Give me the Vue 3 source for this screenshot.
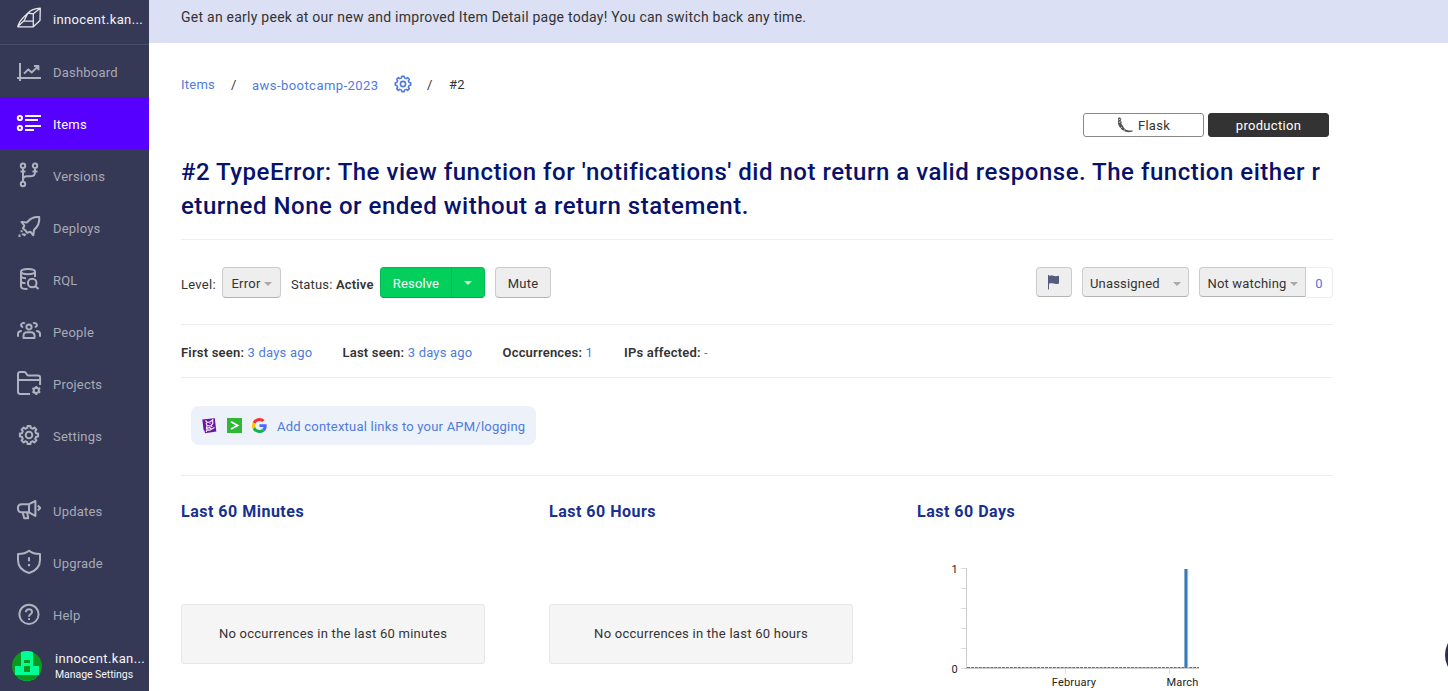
<script setup>
function gear(cx, cy, inner, outer, teeth) {
  const step = (Math.PI * 2) / teeth
  const pt = (r, a) => `${(cx + r * Math.sin(a)).toFixed(2)} ${(cy - r * Math.cos(a)).toFixed(2)}`
  let d = ''
  for (let i = 0; i < teeth; i++) {
    const a = i * step
    d += `${i ? 'L' : 'M'}${pt(inner, a - step * 0.3)}L${pt(outer, a - step * 0.2)}L${pt(outer, a + step * 0.2)}L${pt(inner, a + step * 0.3)}`
  }
  return d + 'Z'
}
const circle = (x, y, r) => `M${x - r} ${y}a${r} ${r} 0 1 0 ${2 * r} 0a${r} ${r} 0 1 0 ${-2 * r} 0Z`

const primary = [
  { name: 'Dashboard', d: 'M5 6V24M2 21H26M9 16.6L13.3 12.4L16.8 15.4L23 9.4M19 9H23.4V13.2' },
  { name: 'Items', active: true, d: circle(4.9, 9, 2.1) + circle(4.9, 19, 2.1) + 'M10 7H26M10 11H23M10 17H26M10 21H19' },
  { name: 'Versions', d: circle(8, 4.8, 2.2) + circle(20, 4.8, 2.2) + circle(8, 23, 2.2) + 'M8 7V20.8M5.5 10.5H10.5M17.5 10.5H22.5M20 7V11C20 14 18.5 15.2 16 15.2H12C9.500 15.2 8 16.5 8 19' },
  { name: 'Deploys', d: 'M24.2 4C19 3.5 15 5.5 12 9.5L6.5 9L9.3 12.5L8 15.5L10.5 17.5L12 19.8L15.5 18.8L18.3 22.3L19 17C23 13.5 24.8 9 24.2 4ZM6.6 17.3V19.2M4.5 21.5V24M8.5 20.5L7.3 22M10.5 20.8L9 23' },
  { name: 'RQL', d: 'M6 6.5C6 3 20 3 20 6.5C20 10 6 10 6 6.5V21.5C6 23.5 9 24 12.5 24M20 6.5V12M6 11.5C7 13 9 13.2 11 13.2M6 16.5C7 18 8.5 18.3 10.5 18.3' + circle(17.2, 18, 4.3) + 'M20.5 21.2L23.5 24' },
  { name: 'People', d: circle(14, 10, 2.6) + 'M8.5 21V18.7C8.5 16.3 10 15.2 12 15.2H16C18 15.2 19.5 16.3 19.5 18.7V21ZM10 6.5C6.3 4.4 4.3 9.8 8.2 10M18 6.5C21.7 4.4 23.7 9.8 19.8 10M3 19.8V17C3 14.9 4 14 6.8 14M25 19.8V17C25 14.9 24 14 21.2 14' },
  { name: 'Projects', d: 'M15 25H5.5C4 25 3 24 3 22.5V5C3 3.7 4 2.9 5.2 2.9H9.3C11.8 2.9 11 6.5 13.5 6.5H22.8C24.3 6.5 25.1 7.2 25.1 8.5V16M3 11H25' + circle(21.3, 21.4, 2.6) + 'M21.3 16.9V18.8M21.3 24V25.9M17.4 19.1L19 20.1M23.6 22.7L25.200 23.7M25.200 19.1L23.6 20.1M19 22.7L17.4 23.7' },
  { name: 'Settings', d: gear(14, 14, 7.3, 9.2, 8) + circle(14, 14, 3.3) },
]
const secondary = [
  { name: 'Updates', d: 'M14 8.2H6.8C4.2 8.2 2.9 9.8 2.9 12.2C2.9 14.6 4.2 16.3 6.8 16.3H14ZM14 8.2L20.4 5V20L14 16.3M7.7 16.5L9.2 22.3H13.2L12.2 16.5M22.8 9.5L25.2 12L22.8 14.500' },
  { name: 'Upgrade', d: 'M14 2.8C11 5.3 7 6.1 3 6.1V12C3 18.5 7.5 23 14 25C20.5 23 25 18.5 25 12V6.1C21 6.1 17 5.3 14 2.8ZM14 9.3V13.3M14 16V18.2' },
  { name: 'Help', d: circle(14, 14.3, 9.6) + 'M10.9 12.2C10.8 8.2 17.1 8.2 17 12C17 14.3 14 14.2 14 16.7M14 18.2V20' },
]
const gearIcon = gear(9, 9, 6.3, 7.8, 8) + circle(9, 9, 2.6)
</script>

<template>
  <div class="page">
    <aside class="sidebar">
      <div class="brand">
        <svg class="logo" width="28" height="24" viewBox="0 0 28 24">
          <path d="M2.8 19.8C4 13 9 10 13 6C16 2.8 20 1.6 25.3 1.2L25 13.5L18.3 19.8ZM18.3 19.5V6.8L25.3 1.2M13 6L18.3 6.8M13 6L9 13.8L18 14.2M9 13.8L2.8 19.5" />
        </svg>
        <span>innocent.kan...</span>
      </div>
      <nav>
        <a v-for="i in primary" :key="i.name" class="nav-item" :class="{ active: i.active }">
          <svg width="28" height="28" viewBox="0 0 28 28"><path :d="i.d" /></svg><span>{{ i.name }}</span>
        </a>
      </nav>
      <nav class="lower">
        <a v-for="i in secondary" :key="i.name" class="nav-item">
          <svg width="28" height="28" viewBox="0 0 28 28"><path :d="i.d" /></svg><span>{{ i.name }}</span>
        </a>
      </nav>
      <div class="user">
        <svg class="avatar" width="30" height="30" viewBox="0 0 30 30">
          <defs><clipPath id="round"><circle cx="15" cy="15" r="15" /></clipPath></defs>
          <g clip-path="url(#round)">
            <path fill="#0b981f" d="M0 0H30V30H0Z" />
            <path fill="#00ff94" d="M9 0H21V15H27V24H24V30H6V24H3V15H9Z" />
            <path fill="#0b981f" d="M12 9H18V12H12ZM12 15H18V21H12ZM6 24H24V30H6Z" />
          </g>
        </svg>
        <div><div class="user-name">innocent.kan...</div><div class="manage">Manage Settings</div></div>
      </div>
    </aside>

    <main>
      <div class="banner"><span>Get an early peek at our new and improved Item Detail page today! You can switch back any time.</span></div>
      <div class="content">
        <div class="crumbs">
          <a class="c-items">Items</a><span class="c-sep">/</span><a class="c-project">aws-bootcamp-2023</a>
          <svg width="18" height="18" viewBox="0 0 18 18"><path :d="gearIcon" /></svg><span class="c-sep2">/</span><span>#2</span>
        </div>
        <div class="badges">
          <span class="badge flask">
            <svg width="17" height="16" viewBox="0 0 17 16">
              <path fill="#555" d="M1 1L3 .3L4.4 2L3.8 3.8L4.8 5L4.3 6.5L6 9L7 11L9 12.7L12 13.5L15.7 13.6V14.5L12 15.2L8.5 14.7L5 12.7L2.5 10L1 7Z" />
              <path stroke="#fff" stroke-width=".7" fill="none" d="M1.5 3L3.5 2M1.5 5.5L3.7 4.7M5 10L3.7 11.2M8 12.3L7 13.8" />
            </svg><span>Flask</span>
          </span>
          <span class="badge production"><span>production</span></span>
        </div>
        <h1>#2 TypeError: The view function for 'notifications' did not return a valid response. The function either r<br>eturned None or ended without a return statement.</h1>

        <div class="actions">
          <span class="label level">Level:</span>
          <button class="btn error">Error<i class="caret"></i></button>
          <span class="label status">Status: <b>Active</b></span>
          <div class="resolve"><button>Resolve</button><button class="drop"><i class="caret"></i></button></div>
          <button class="btn mute">Mute</button>
          <div class="right">
            <button class="btn flag"><svg width="14" height="16" viewBox="0 0 14 16"><path d="M1 1H2V2C5 .5 7 3.2 12 1.7V9.5C8 11.3 5.5 8.3 2 9.8V15.5H1Z" /></svg></button>
            <button class="btn assign"><span>Unassigned</span><i class="caret"></i></button>
            <div class="watch"><button class="btn">Not watching<i class="caret"></i></button><span class="count">0</span></div>
          </div>
        </div>

        <div class="facts">
          <span class="f1"><b>First seen:</b> <a>3 days ago</a></span>
          <span class="f2"><b>Last seen:</b> <a>3 days ago</a></span>
          <span class="f3"><b>Occurrences:</b> <a>1</a></span>
          <span class="f4"><b>IPs affected:</b> <a>-</a></span>
        </div>

        <div class="links-row">
          <a class="links">
            <svg width="15" height="16" viewBox="0 0 15 16">
              <path fill="#6b13a5" d="M.3 1.5L12.8 .3L14.3 13.5L3 15.2L2.5 12.5L1.6 12.3Z" />
              <path fill="none" stroke="#f4ecfa" stroke-width="1.2" d="M3.5 2.5L5.2 4.5L8.3 3.8L10.7 2L10.8 5.5L8.8 7.8L5 7.5L4 5M5 7.5L4.5 10.5L7.5 9.5L9.2 11.2L12.5 9.5M4.2 14L5 11.8L8.7 12.2M8.8 7.8L10.3 8.8M7.5 5.2L8.5 5.5" />
            </svg>
            <svg width="15" height="15" viewBox="0 0 15 15"><path fill="#2eb835" d="M0 0H15V15H0Z" /><path fill="none" stroke="#fff" stroke-width="1.7" d="M4 3.8L10.7 7.4L4 11" /></svg>
            <svg width="15" height="15" viewBox="0 0 48 48">
              <path fill="#ff302b" d="M24 9.5c3.5 0 6.7 1.2 9.2 3.6l6.9-6.9C35.9 2.4 30.5 0 24 0 14.6 0 6.5 5.4 2.6 13.2l8 6.2C12.4 13.7 17.7 9.5 24 9.5z" />
              <path fill="#4d66ff" d="M47 24.5c0-1.6-.2-3.1-.4-4.5H24v9h12.9c-.6 3-2.3 5.5-4.8 7.2l7.7 6C44.4 38 47 31.8 47 24.5z" />
              <path fill="#ffc400" d="M10.5 28.6c-.5-1.5-.8-3-.8-4.6s.3-3.1.8-4.6l-8-6.2C.9 16.5 0 20.1 0 24s.9 7.5 2.6 10.8z" />
              <path fill="#10b64a" d="M24 48c6.5 0 11.9-2.1 15.9-5.8l-7.7-6c-2.2 1.5-4.9 2.3-8.2 2.3-6.3 0-11.6-4.2-13.5-9.9l-8 6.2C6.5 42.6 14.6 48 24 48z" />
            </svg>
            <span>Add contextual links to your APM/logging</span>
          </a>
        </div>

        <div class="charts">
          <section><h2>Last 60 Minutes</h2><div class="empty">No occurrences in the last 60 minutes</div></section>
          <section><h2>Last 60 Hours</h2><div class="empty">No occurrences in the last 60 hours</div></section>
          <section>
            <h2>Last 60 Days</h2>
            <svg class="chart" width="304" height="140" viewBox="0 0 304 140">
              <path stroke="#ddd" d="M44 17.5H49M44 37.5H49M44 57.5H49M44 77.5H49M44 97.5H49M44 117.5H49M148.5 117V123M252.5 117V123" />
              <path stroke="#ccc" d="M49.5 17V117M49 117.5H282" />
              <path stroke="#3a77b3" stroke-dasharray="3 .9" d="M50 116.5H282" />
              <path stroke="#a9c7e2" stroke-width="4" d="M269.2 18V117" />
              <path stroke="#3a77b3" stroke-width="2.6" d="M268.9 18V117" />
              <text x="41" y="22" text-anchor="end">1</text><text x="41" y="122" text-anchor="end">0</text>
              <text x="157" y="135" text-anchor="middle">February</text><text x="265.5" y="135" text-anchor="middle">March</text>
            </svg>
          </section>
        </div>
      </div>
    </main>
    <div class="chat"></div>
  </div>
</template>

<style>
body { margin: 0; overflow: hidden; background: #fff; }
</style>
<style scoped>
* { box-sizing: border-box; }
.page { position: relative; display: flex; width: 1448px; height: 691px; overflow: hidden; font: 13px/20px Roboto, "Liberation Sans", sans-serif; color: #333; letter-spacing: .26px; }
.page svg { flex: none; display: block; }
button { font: inherit; letter-spacing: inherit; margin: 0; }
a { color: #4e7cdc; }
.sidebar { width: 149px; flex: none; background: #363955; display: flex; flex-direction: column; }
.brand { height: 45px; flex: none; display: flex; padding: 7px 0 0 15px; border-bottom: 1px solid #4b4e6b; color: #f3f3f7; white-space: nowrap; }
.brand span { margin: 3px 0 0 10px; letter-spacing: .36px; }
.logo { fill: none; stroke: #e5e5eb; stroke-width: 1.3; stroke-linejoin: round; }
.nav-item { display: flex; height: 52px; padding: 12px 0 0 15px; color: #a7aab7; letter-spacing: .2px; }
.nav-item span { margin: 6px 0 0 10px; }
.nav-item svg { fill: none; stroke: #b0b3bf; stroke-width: 2; stroke-linejoin: round; }
.nav-item.active { background: #5600ff; color: #fff; }
.nav-item.active svg { stroke: #fff; }
.lower { margin-top: 23px; }
.user { display: flex; padding: 11px 0 0 12px; color: #f5f5f8; white-space: nowrap; }
.user > div { margin-left: 13px; }
.user-name { line-height: 16px; letter-spacing: .36px; }
.manage { font-size: 10.5px; line-height: 15px; letter-spacing: -.05px; }
main { flex: 1; min-width: 0; }
.banner { height: 43px; background: #dce0f5; padding: 7px 0 0 32px; font-size: 14px; white-space: nowrap; letter-spacing: .25px; }
.content { width: 1184px; padding-left: 32px; }
.crumbs { display: flex; height: 70px; padding-top: 32px; }
.c-items { width: 50px; }
.c-sep { width: 21px; }
.c-project { width: 141.5px; padding-top: 1px; letter-spacing: .45px; }
.crumbs svg { fill: none; stroke: #4e7cdc; stroke-width: 1.6; stroke-linejoin: round; }
.c-sep2 { margin-left: 15.5px; width: 22px; }
.badges { display: flex; justify-content: flex-end; gap: 4px; padding-right: 4px; }
.badge { display: flex; justify-content: center; align-items: center; gap: 4px; width: 121px; height: 24px; border: 1px solid #888; border-radius: 3px; }
.badge span { padding-top: 2px; letter-spacing: .3px; }
.production { background: #333; color: #fff; border-color: #333; }
h1 { margin: 17px 0 0; height: 86px; padding-top: 1px; border-bottom: 1px solid #eee; font: 500 24px/34px Roboto, "Liberation Sans", sans-serif; letter-spacing: .515px; color: #07126b; white-space: nowrap; }
.actions { display: flex; height: 85px; padding-top: 27px; border-bottom: 1px solid #eee; white-space: nowrap; }
.label { padding-top: 8px; }
.level { width: 41px; }
.status { width: 89px; margin-left: 10px; letter-spacing: .17px; }
.btn { display: flex; align-items: center; justify-content: center; height: 31px; padding: 2px 0 0; border: 1px solid #ccc; border-bottom-color: #b3b3b3; border-radius: 4px; background: #eee; color: #333; }
.caret { width: 0; height: 0; border: 4px solid transparent; border-top-color: #aaa; border-bottom: 0; margin-left: 3px; }
.error { width: 59px; }
.resolve { display: flex; width: 105px; height: 31px; border: 1px solid #04b953; border-bottom-color: #04a44a; border-radius: 4px; background: #02cf5c; }
.resolve button { width: 71px; padding: 3px 0 0; border: 0; border-right: 1px solid #04b953; background: none; color: #fff; letter-spacing: .15px; }
.resolve .drop { width: 32px; padding: 0; border: 0; display: flex; align-items: center; justify-content: center; }
.resolve .caret { border-top-color: #c6f5da; margin: 0; }
.mute { width: 56px; margin-left: 10px; }
.right { display: flex; margin-left: auto; }
.right .btn { height: 30px; padding-top: 3px; letter-spacing: .18px; }
.flag svg { fill: #555b7e; }
.right .flag { width: 36px; padding: 0 0 1px; }
.assign { width: 107px; margin: 0 10px; }
.right .assign { justify-content: space-between; padding: 3px 7px 0; }
.watch { display: flex; }
.watch .btn { width: 107px; border-radius: 4px 0 0 4px; }
.count { width: 27px; height: 31px; border: 1px solid #eee; border-left: 0; border-radius: 0 4px 4px 0; text-align: center; padding-top: 6px; line-height: 19px; color: #5273e0; }
.facts { display: flex; height: 53px; padding-top: 18px; border-bottom: 1px solid #eee; white-space: nowrap; letter-spacing: .2px; }
.facts b, .status b { font-weight: 600; }
.f1 { width: 161.5px; }
.f2 { width: 160px; }
.f3 { width: 121.5px; }
.links-row { height: 98px; padding: 28px 0 0 10px; border-bottom: 1px solid #eee; }
.links { display: flex; align-items: center; gap: 10px; width: 345px; height: 39px; padding-left: 11px; border-radius: 8px; background: #ecf1fa; white-space: nowrap; letter-spacing: .22px; }
.links span { padding-top: 2px; }
.charts { display: grid; grid-template-columns: 304px 304px 304px; gap: 64px; padding-top: 26px; }
h2 { margin: 0; font: 700 16px/20px Roboto, "Liberation Sans", sans-serif; letter-spacing: .5px; color: #19308f; }
.empty { display: flex; align-items: center; justify-content: center; height: 60px; margin-top: 82px; border: 1px solid #e6e6e6; border-radius: 3px; background: #f5f5f5; }
.chart { margin-top: 29px; fill: none; }
.chart text { font-size: 11px; fill: #222; letter-spacing: .2px; }
.chat { position: absolute; left: 1445px; top: 630px; width: 50px; height: 50px; border-radius: 50%; background: #2b2f4a; }
</style>
